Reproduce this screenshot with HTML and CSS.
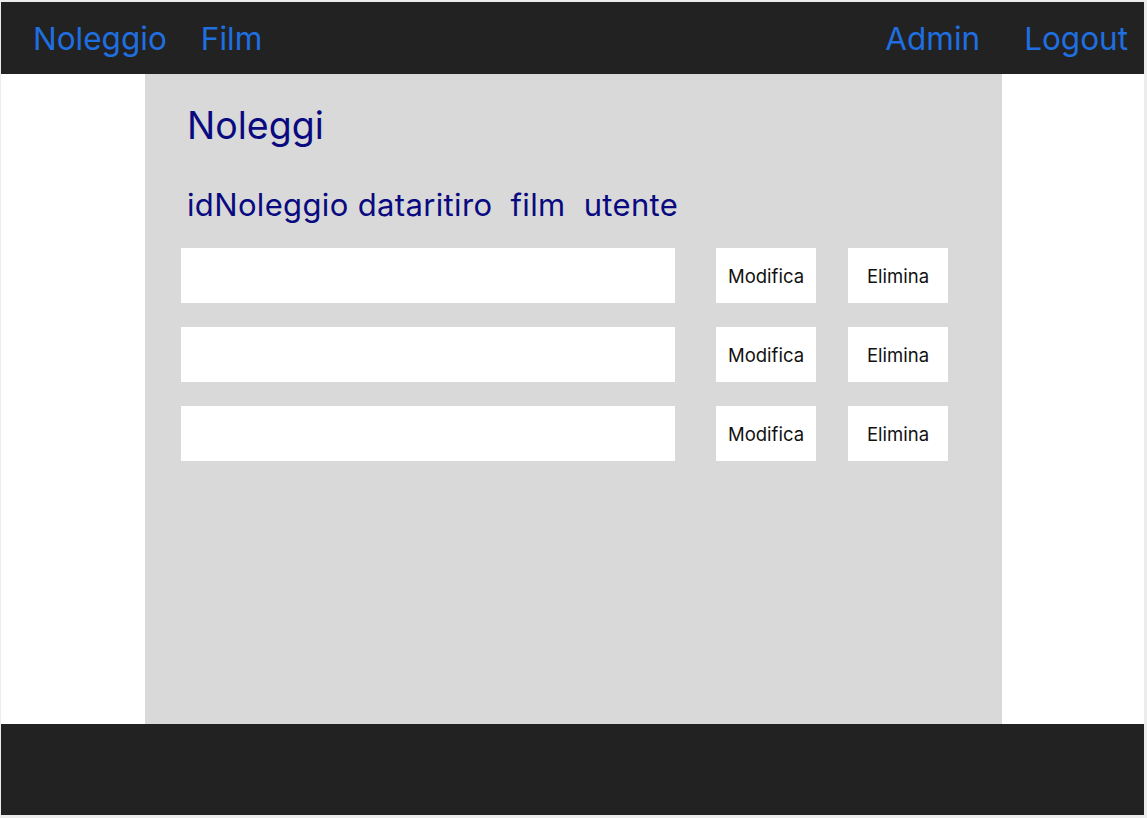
FILE: index.html
```html
<!DOCTYPE html>
<html lang="it">
<head>
<meta charset="utf-8">
<title>Noleggi</title>
<link rel="stylesheet" href="styles.css">
</head>
<body>
<div class="frame">
  <header class="topbar">
    <nav class="nav-left">
      <a class="nav-link" href="#">Noleggio</a>
      <a class="nav-link" href="#">Film</a>
    </nav>
    <nav class="nav-right">
      <a class="nav-link" href="#">Admin</a>
      <a class="nav-link" href="#">Logout</a>
    </nav>
  </header>
  <main class="content">
    <section class="panel">
      <h1 class="title">Noleggi</h1>
      <div class="columns">idNoleggio dataritiro&nbsp; film&nbsp; utente</div>
      <div class="rows">
        <div class="row">
          <div class="field"></div>
          <button class="btn btn-edit">Modifica</button>
          <button class="btn">Elimina</button>
        </div>
        <div class="row">
          <div class="field"></div>
          <button class="btn btn-edit">Modifica</button>
          <button class="btn">Elimina</button>
        </div>
        <div class="row">
          <div class="field"></div>
          <button class="btn btn-edit">Modifica</button>
          <button class="btn">Elimina</button>
        </div>
      </div>
    </section>
  </main>
  <footer class="bottombar"></footer>
</div>
</body>
</html>
```
FILE: styles.css
```css
* { box-sizing: border-box; }
html, body { margin: 0; padding: 0; }
body {
  background: #ececec;
  font-family: Inter, "Noto Sans", sans-serif;
  width: 1147px;
  height: 818px;
  overflow: hidden;
}
.frame {
  margin: 2px 3px 3px 1px;
  width: 1143px;
  height: 813px;
  background: #ffffff;
  display: flex;
  flex-direction: column;
}
.topbar {
  height: 72px;
  background: #222222;
  display: flex;
  align-items: center;
  justify-content: space-between;
  padding: 0 16px 0 32px;
}
.nav-left { display: flex; gap: 34px; }
.nav-right { display: flex; gap: 44px; }
.nav-link {
  color: #1f6fe0;
  text-decoration: none;
  font-size: 31.5px;
  line-height: 1;
  margin-top: 1px;
}
.content {
  flex: 1;
  display: flex;
}
.panel {
  margin-left: 144px;
  width: 857px;
  background: #d9d9d9;
  padding: 29px 0 0 36px;
}
.title {
  margin: 0 0 0 6px;
  font-weight: 400;
  font-size: 37.5px;
  line-height: 46px;
  color: #0a0a80;
}
.columns {
  margin: 38px 0 0 6px;
  font-size: 31px;
  line-height: 36px;
  letter-spacing: 0.35px;
  color: #0a0a80;
}
.rows {
  margin-top: 25px;
  display: flex;
  flex-direction: column;
  gap: 24px;
}
.row {
  display: flex;
  align-items: center;
}
.field {
  width: 494px;
  height: 55px;
  background: #ffffff;
}
.btn {
  width: 100px;
  height: 55px;
  background: #ffffff;
  border: 0;
  padding: 0;
  font-family: Inter, "Noto Sans", sans-serif;
  font-size: 18.5px;
  color: #111111;
  margin-left: 32px;
}
.btn-edit { margin-left: 41px; }
.bottombar {
  height: 91px;
  background: #222222;
}
```
